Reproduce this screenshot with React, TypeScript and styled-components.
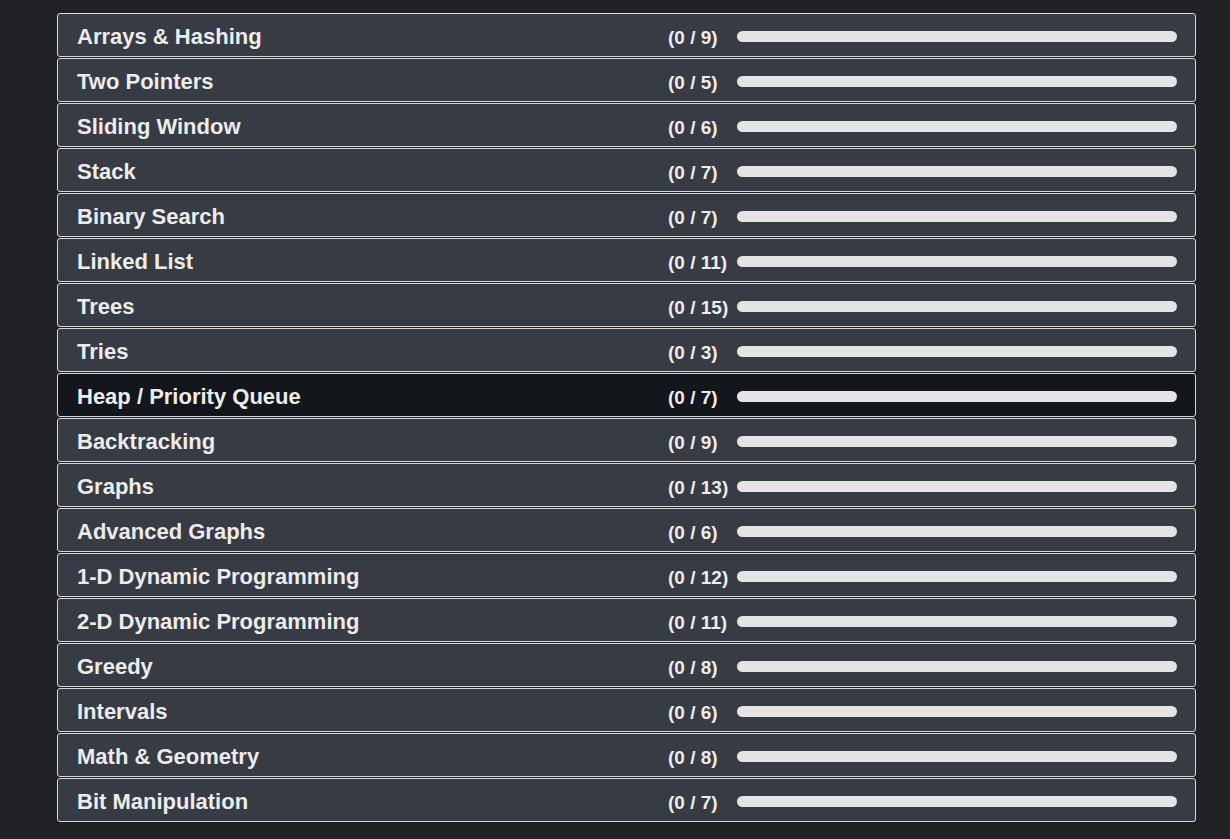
import React from "react";
import styled, { createGlobalStyle } from "styled-components";

const Global = createGlobalStyle`
  html, body { margin: 0; padding: 0; background: #212226; }
  body { font-family: "Liberation Sans", Arial, sans-serif; }
`;

const Page = styled.div`
  min-height: 839px;
  background: #212226;
  padding: 13px 0 0 57px;
  box-sizing: border-box;
`;

const List = styled.div`
  width: 1139px;
  display: flex;
  flex-direction: column;
  gap: 1px;
`;

const Row = styled.div<{ $active?: boolean }>`
  display: grid;
  grid-template-columns: 1fr 69px 440px;
  align-items: center;
  height: 44px;
  box-sizing: border-box;
  padding: 0 18px 0 19px;
  border: 1px solid #d8d8d8;
  border-radius: 3px;
  background: ${(p) => (p.$active ? "#13161a" : "#373b43")};
  color: #ececec;
`;

const Title = styled.div`
  font-size: 22px;
  font-weight: 700;
  line-height: 1;
  padding-top: 3px;
`;

const Count = styled.div`
  font-size: 19px;
  font-weight: 700;
  line-height: 1;
  padding-top: 4px;
`;

const Track = styled.div`
  height: 11px;
  margin-top: 3px;
  border-radius: 6px;
  background: #e4e4e4;
  overflow: hidden;
`;

const Fill = styled.div`
  height: 100%;
  background: #4caf50;
`;

const topics: [string, number][] = [
  ["Arrays & Hashing", 9],
  ["Two Pointers", 5],
  ["Sliding Window", 6],
  ["Stack", 7],
  ["Binary Search", 7],
  ["Linked List", 11],
  ["Trees", 15],
  ["Tries", 3],
  ["Heap / Priority Queue", 7],
  ["Backtracking", 9],
  ["Graphs", 13],
  ["Advanced Graphs", 6],
  ["1-D Dynamic Programming", 12],
  ["2-D Dynamic Programming", 11],
  ["Greedy", 8],
  ["Intervals", 6],
  ["Math & Geometry", 8],
  ["Bit Manipulation", 7],
];

export default function App() {
  return (
    <>
      <Global />
      <Page>
        <List>
          {topics.map(([name, total]) => {
            const done = 0;
            return (
              <Row key={name} $active={name === "Heap / Priority Queue"}>
                <Title>{name}</Title>
                <Count>
                  ({done} / {total})
                </Count>
                <Track>
                  <Fill style={{ width: `${(done / total) * 100}%` }} />
                </Track>
              </Row>
            );
          })}
        </List>
      </Page>
    </>
  );
}
